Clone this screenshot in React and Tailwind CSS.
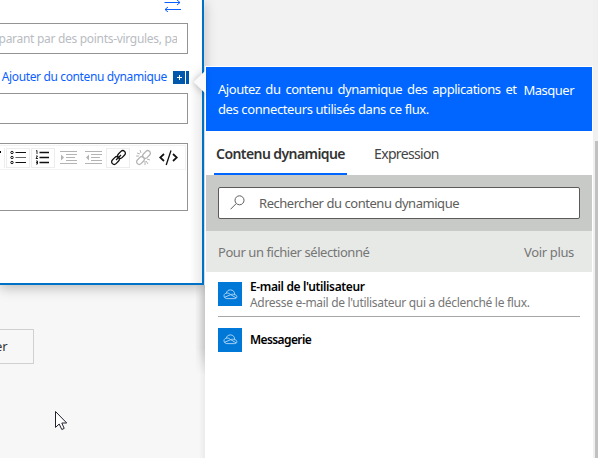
import React from "react";

function SwapIcon() {
  return (
    <svg width="17" height="12" viewBox="0 0 17 12" fill="none" stroke="#0b5fff" className="block">
      <path d="M0.5 2.5H16M13 0L16 2.5L13 5M17 9.5H1M4 7L1 9.5L4 12" />
    </svg>
  );
}

function ListIcon({ numbered }) {
  return (
    <svg width="17" height="15" viewBox="0 0 17 15" fill="none" stroke="#111">
      {numbered ? (
        <>
          <path d="M4.5 2.5H14M4.5 7.5H14M4.5 12.5H14" strokeWidth="1.4" />
          <path d="M1 1L2 .5V4M1 6H2.5L1 8.5H3M1 11H2.5V14H1M1 12.5H2.5" strokeWidth=".9" />
        </>
      ) : (
        <>
          <path d="M5.5 2.5H16M5.5 12.5H16" strokeWidth="1.2" />
          <path d="M5.5 7.5H16" stroke="#666" />
          <circle cx="2" cy="2.5" r="1.2" />
          <circle cx="2" cy="7.5" r="1.2" />
          <circle cx="2" cy="12.5" r="1.2" />
        </>
      )}
    </svg>
  );
}

function IndentIcon({ outdent }) {
  return (
    <svg width="17" height="15" viewBox="0 0 17 15" fill="none" stroke="#b4b4b4" strokeWidth="1.1">
      <path d="M0 1.5H17M6 4.5H17M6 7.5H15M6 10.5H17M0 13.5H17" />
      <path d={outdent ? "M4 4.5V10.5L1 7.5Z" : "M1 4.5V10.5L4 7.5Z"} fill="#b4b4b4" stroke="none" />
    </svg>
  );
}

function LinkIcon({ broken }) {
  return (
    <svg width="17" height="17" viewBox="0 0 17 17" fill="none" stroke={broken ? "#b4b4b4" : "#111"} strokeWidth="1.3">
      <rect x="-2.6" y="-4.4" width="5.2" height="8.8" rx="2.6" transform="translate(11.5 5.5) rotate(45)" />
      <rect x="-2.6" y="-4.4" width="5.2" height="8.8" rx="2.6" transform="translate(5.5 11.5) rotate(45)" />
      {broken ? <path d="M2 4L5 5M5 1L6 4M1 7H4M12 10L15 11M11 12L13 15M10 12V16" strokeWidth="1" /> : <path d="M6 11L11 6" />}
    </svg>
  );
}

function CodeIcon() {
  return (
    <svg width="19" height="16" viewBox="0 0 19 16" fill="none" stroke="#111" strokeWidth="1.7">
      <path d="M5 4L1.2 7.5L5 11M14 4L17.8 7.5L14 11" />
      <path d="M12 0.5L7.2 15" strokeWidth="1.3" />
    </svg>
  );
}

function CloudTile() {
  return (
    <span className="flex h-6 w-6 shrink-0 items-center justify-center bg-[#0078d7]">
      <svg width="15" height="11" viewBox="0 0 16 12" fill="none" stroke="#b5daf7" className="block">
        <path d="M4 10.5H12.5C15.8 10.5 15.7 6.4 12.5 6.2C12.8 2.8 10.5 1 8 1C5.5 1 3.8 2.3 3.5 4.6C.2 4.8 -.3 10 4 10.5Z" />
        <path d="M3.5 4.6C5.5 4.1 7 5 8 6L14.2 9.7M1.6 9L8.4 6.1C9.5 5.6 11 5.5 12.5 6.2" />
      </svg>
    </span>
  );
}

function ToolButton({ children, framed }) {
  return (
    <span className={"flex h-5 w-6 shrink-0 items-center justify-center border " + (framed ? "border-[#ededed]" : "border-transparent")}>
      {children}
    </span>
  );
}

function FlowCard() {
  return (
    <section className="relative h-[285px] w-[204px] border-r-2 border-b-2 border-[#0072c6] bg-white shadow-[0_3px_12px_rgba(0,0,0,0.25)]">
      <div className="ml-[164px] h-[23px]"><SwapIcon /></div>
      <div className="flex h-[31px] w-[188px] items-center overflow-hidden border border-l-0 border-[#949494] pr-[10px]">
        <span className="flex w-full justify-end overflow-hidden whitespace-nowrap text-[12px] text-[#b9bcc2]">
          <span className="-mr-px tracking-[-0.3px]">éparant par des points-virgules, pa</span>
        </span>
      </div>
      <div className="flex h-[39px] w-[189px] items-center justify-end pt-[7px]">
        <span className="shrink-0 whitespace-nowrap pb-px text-[12px] tracking-[-0.37px] text-[#0b5fff]">Ajouter du contenu dynamique</span>
        <span className="ml-[6px] flex h-[13px] w-3 shrink-0 items-center justify-center bg-[#0058ad]">
          <svg width="5" height="5" viewBox="0 0 5 5" stroke="#fff"><path d="M0 2.5H5M2.5 0V5" /></svg>
        </span>
        <span className="ml-px h-[13px] w-[3px] shrink-0 bg-[#0058ad]" />
      </div>
      <div className="h-[31px] w-[188px] border border-l-0 border-[#949494]" />
      <div className="mt-[19px] h-[68px] w-[188px] border border-l-0 border-[#949494]">
        <div className="mr-px mt-px flex h-[25px] items-center border-r border-b border-t border-[#f2f2f2]">
          <span className="flex h-5 w-[5px] border-r border-[#ededed]"><span className="mt-[3px] h-[2px] w-px bg-black" /></span>
          <span className="ml-px flex gap-px">
            <ToolButton framed><ListIcon /></ToolButton>
            <ToolButton framed><ListIcon numbered /></ToolButton>
            <ToolButton><IndentIcon /></ToolButton>
            <ToolButton><IndentIcon outdent /></ToolButton>
            <ToolButton framed><LinkIcon /></ToolButton>
            <ToolButton><LinkIcon broken /></ToolButton>
            <ToolButton><CodeIcon /></ToolButton>
          </span>
        </div>
      </div>
    </section>
  );
}

function DynamicPanel() {
  return (
    <section className="relative z-10 mt-[66px] flex h-[392px] w-[388px] flex-col border-t border-l border-r border-white bg-white">
      <svg width="13" height="24" viewBox="0 0 13 24" className="absolute -left-[13px] top-[3px] drop-shadow-[-1px_1px_3px_rgba(0,0,0,0.22)]">
        <path d="M13 0V24L.5 12Z" fill="#fafafa" />
      </svg>
      <header className="flex h-16 shrink-0 justify-between bg-[#0066ff] pl-3 pr-[18px] pt-3 text-[13px] leading-5 text-white">
        <div className="whitespace-nowrap">
          <div className="tracking-[-0.45px] [word-spacing:2px]">Ajoutez du contenu dynamique des applications et</div>
          <div className="tracking-[-0.39px]">des connecteurs utilisés dans ce flux.</div>
        </div>
        <span className="pt-px tracking-[-0.5px]">Masquer</span>
      </header>
      <nav className="flex h-11 shrink-0 pl-2 text-[14px]">
        <span className="flex w-[133px] items-center justify-center whitespace-nowrap border-b-2 border-[#0066ff] pt-[2px] font-semibold tracking-[-0.58px] text-[#333]">Contenu dynamique</span>
        <span className="ml-[27px] flex items-center tracking-[-0.65px] text-[#444]">Expression</span>
      </nav>
      <div className="h-14 shrink-0 bg-[#c8cac7] px-3 py-3">
        <div className="flex h-8 items-center rounded-[2px] border border-[#5c5b59] bg-white pl-[11px] text-[13px] text-[#605e5c]">
          <svg width="15" height="15" viewBox="0 0 15 15" fill="none" stroke="#605e5c" className="-mt-px">
            <circle cx="9.5" cy="5.3" r="4.5" /><path d="M6.2 8.6L.5 14.3" />
          </svg>
          <span className="ml-[14px] whitespace-nowrap pt-px tracking-[-0.46px]">Rechercher du contenu dynamique</span>
        </div>
      </div>
      <div className="flex h-[41px] shrink-0 items-center justify-between bg-[#e7e9e6] pl-3 pr-[18px] pt-[2px] text-[13px] text-[#767676]">
        <span className="tracking-[-0.44px]">Pour un fichier sélectionné</span>
        <span className="tracking-[-0.36px]">Voir plus</span>
      </div>
      <div className="mx-3 flex h-[45px] shrink-0 items-center border-b border-[#a6a6a6]">
        <CloudTile />
        <div className="ml-2 whitespace-nowrap pt-[2px] text-[12px] leading-4">
          <div className="font-semibold tracking-[-0.37px] text-black">E-mail de l'utilisateur</div>
          <div className="tracking-[-0.31px] text-[#767676]">Adresse e-mail de l'utilisateur qui a déclenché le flux.</div>
        </div>
      </div>
      <div className="mx-3 flex h-[45px] shrink-0 items-center">
        <CloudTile />
        <span className="ml-2 text-[12px] font-semibold tracking-[-0.6px] text-black">Messagerie</span>
      </div>
    </section>
  );
}

export default function App() {
  return (
    <main className="flex h-[458px] w-[598px] overflow-hidden bg-[#f7f7f7] font-['Noto_Sans','Open_Sans',sans-serif]">
      <div className="relative w-[205px] shrink-0">
        <FlowCard />
        <div className="mt-11 flex h-[35px] w-[34px] items-center border border-l-0 border-[#d0d0d0] text-[13px] text-[#333]">
          <span className="-ml-[5px] pt-px tracking-[-0.2px]">er</span>
        </div>
        <svg width="13" height="20" viewBox="0 0 13 20" className="absolute left-[55px] top-[411px]">
          <path d="M.5 .5V16.4L4.2 13L6.8 18.5L9.2 17.4L6.8 12H11.7Z" fill="#fff" stroke="#22222f" />
        </svg>
        <div className="absolute right-0 top-[285px] h-[90px] w-[10px] bg-linear-to-r from-transparent to-black/15 mask-b-from-70%" />
        <div className="absolute right-[3px] top-[60px] h-[223px] w-[12px] bg-linear-to-r from-transparent to-black/8 mask-t-from-85%" />
        <div className="absolute right-0 top-[285px] h-[173px] w-[6px] bg-linear-to-r from-transparent to-black/5" />
      </div>
      <div className="w-[388px] shrink-0 bg-[#f2f2f2]">
        <DynamicPanel />
      </div>
      <aside className="flex w-[5px] shrink-0 flex-col bg-[#f0f0f0] pl-[2px] pt-[141px]">
        <div className="w-[3px] grow bg-[#c1c1c1]" />
      </aside>
    </main>
  );
}
